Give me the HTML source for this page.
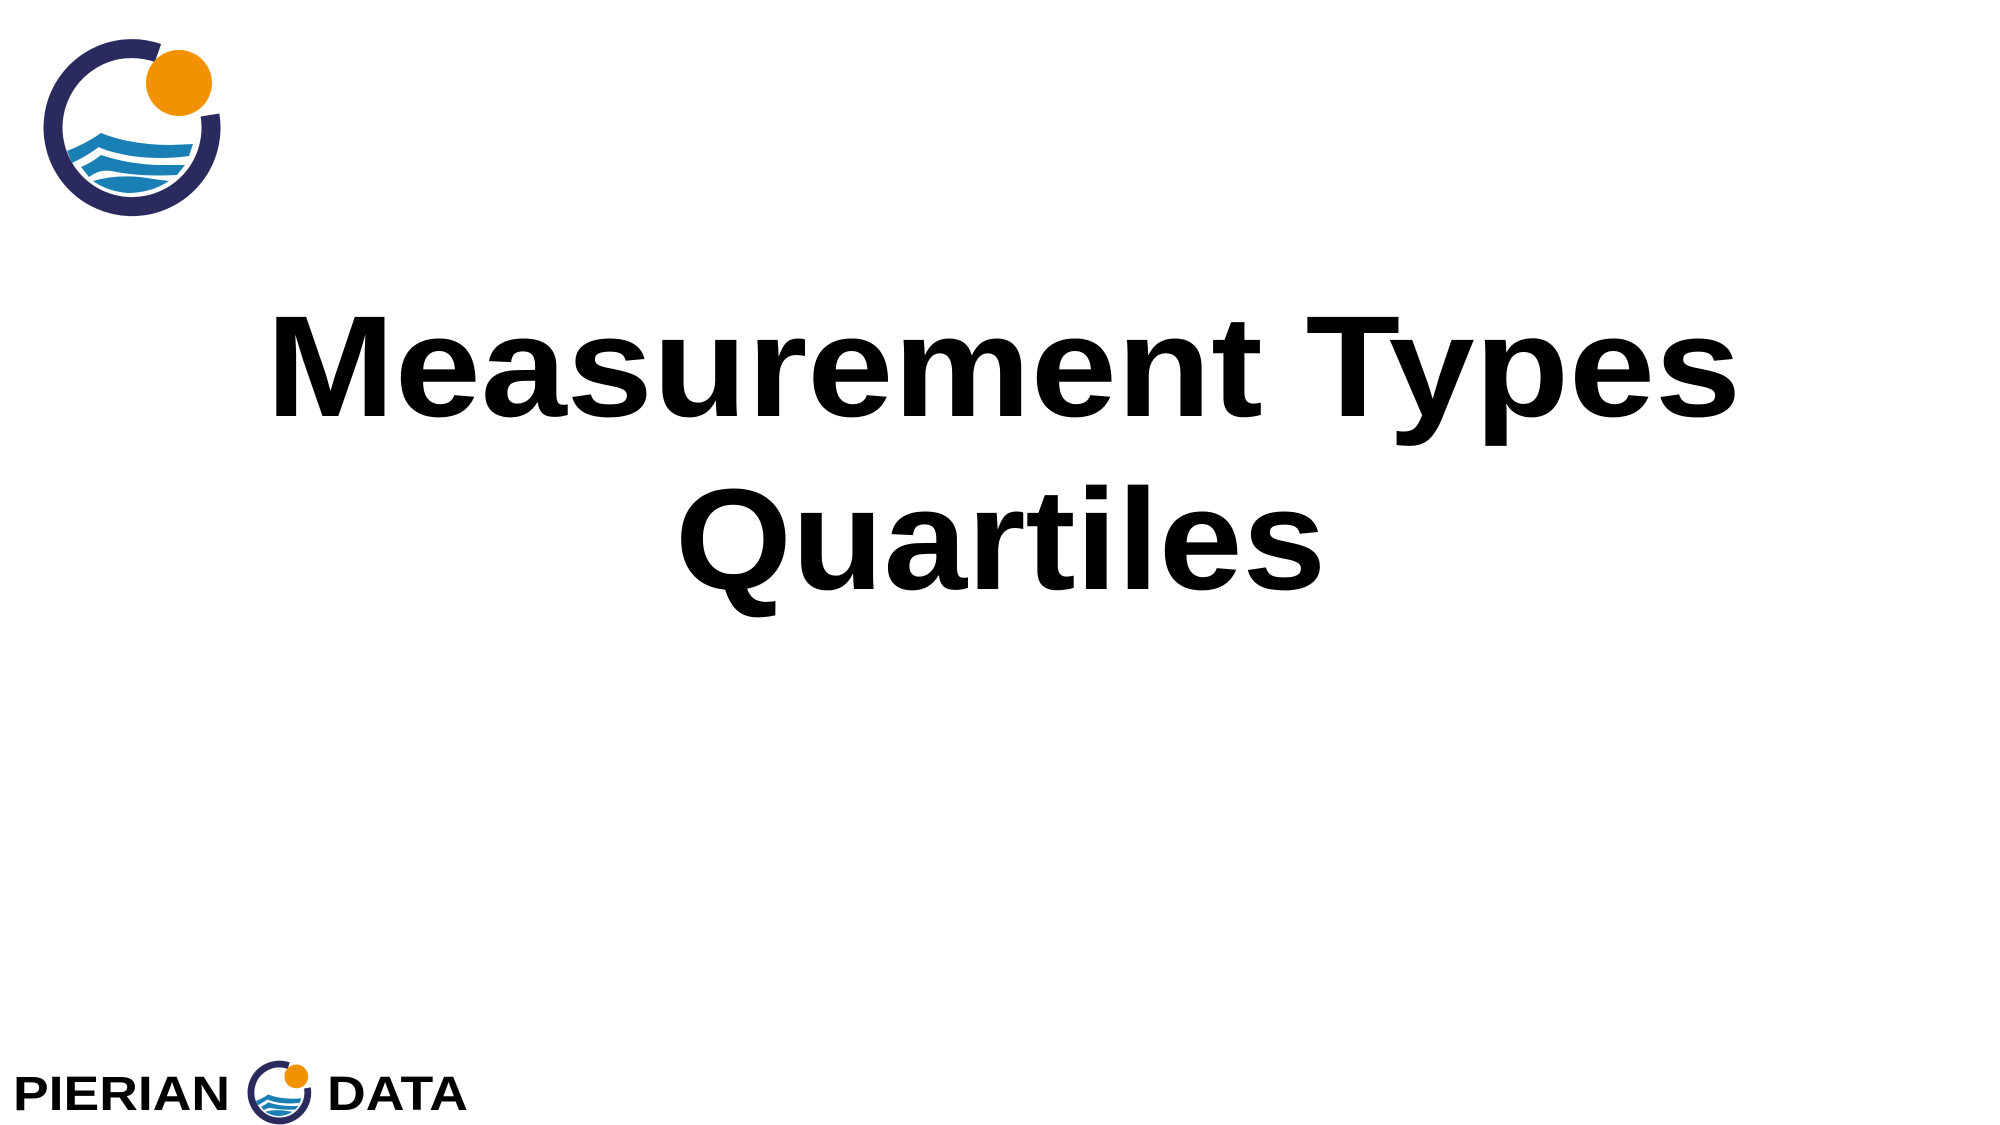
<!DOCTYPE html>
<html><head><meta charset="utf-8"><style>
html,body{margin:0;padding:0;background:#fff;width:2000px;height:1125px;overflow:hidden}
svg{display:block}
</style></head><body>
<svg width="2000" height="1125" viewBox="0 0 2000 1125" xmlns="http://www.w3.org/2000/svg">
<defs>
<g id="logo">
  <path d="M27 -76 A79 79 0 1 0 79 -14" fill="none" stroke="#2b2a5f" stroke-width="19"/>
  <circle cx="48" cy="-46" r="33" fill="#f39200"/>
  <path d="M-64 22 Q-44 14 -30 4 Q0 16 40 16 L62 15 L58 27 Q30 31 0 27 Q-26 22 -32 18 Q-46 28 -59 34 Z" fill="#1a7fb5"/>
  <path d="M-50 38 Q-40 34 -30 26 Q0 36 32 36 L54 36 L46 46 Q10 48 -20 42 Q-32 40 -42 48 Z" fill="#1a7fb5"/>
  <path d="M-38 52 Q-10 44 22 50 L38 52 Q20 64 -4 64 Q-24 62 -38 52 Z" fill="#1a7fb5"/>
</g>
</defs>
<use href="#logo" transform="translate(131,129)"/>
<g font-family="Liberation Sans, sans-serif" font-weight="bold" fill="#000">
  <text x="266" y="416" font-size="144" textLength="1475" lengthAdjust="spacingAndGlyphs">Measurement Types</text>
  <text x="675" y="589" font-size="144" textLength="651" lengthAdjust="spacingAndGlyphs">Quartiles</text>
  <text x="13" y="1110" font-size="48" textLength="217" lengthAdjust="spacingAndGlyphs">PIERIAN</text>
  <text x="327" y="1110" font-size="48" textLength="141" lengthAdjust="spacingAndGlyphs">DATA</text>
</g>
<use href="#logo" transform="translate(279,1093) scale(0.36)"/>
</svg>
</body></html>
